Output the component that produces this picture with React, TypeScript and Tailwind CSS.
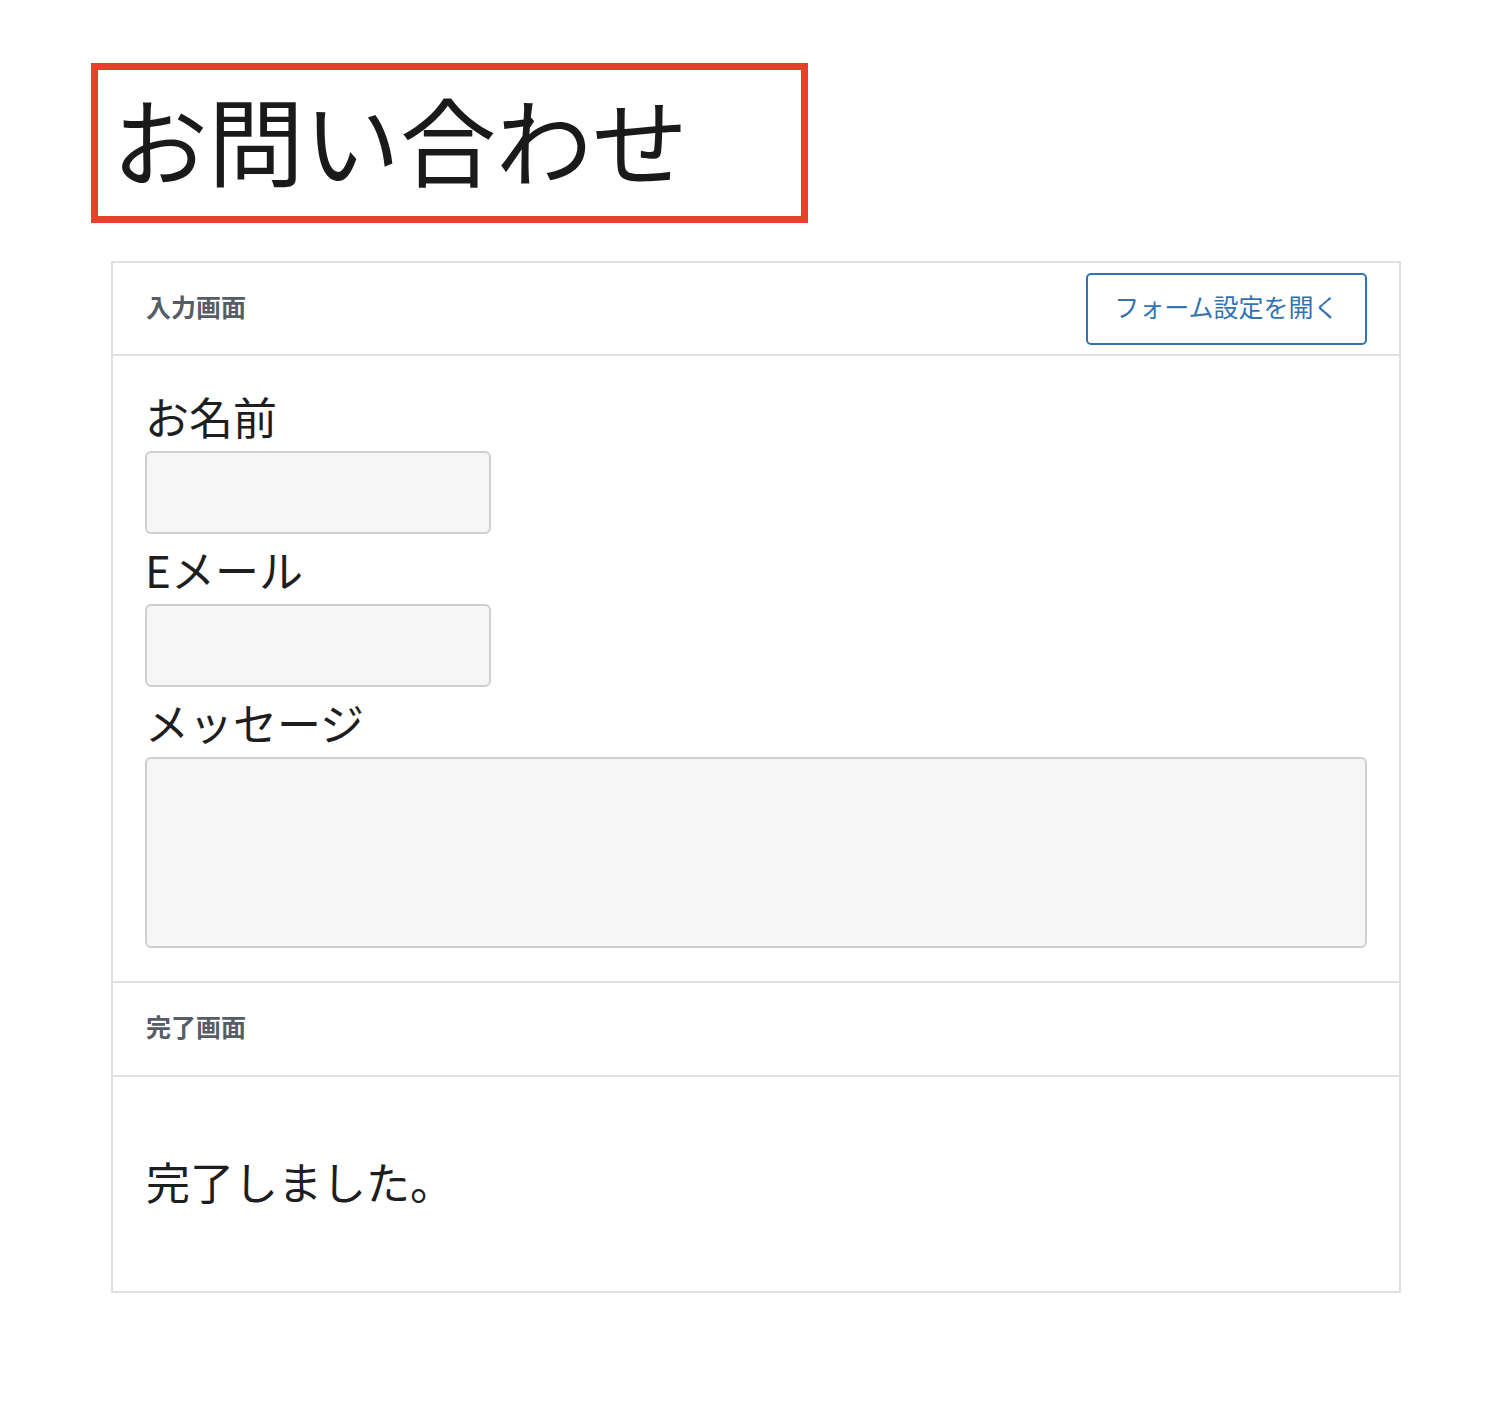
const jp = "font-['Noto_Sans_CJK_JP','Noto_Sans',sans-serif]";

function Field(props: { label: string; tall?: boolean }) {
  return (
    <div>
      <div className="text-[44px] leading-[70px] text-[#1e1e1e]">{props.label}</div>
      <div
        className={
          "rounded-[6px] border-2 border-[#cfcfcf] bg-[#f6f6f6] " +
          (props.tall ? "h-[191px] w-full" : "h-[83px] w-[346px]")
        }
      />
    </div>
  );
}

export default function App() {
  return (
    <div className={"min-h-[1404px] bg-white pt-[63px] " + jp}>
      <div className="ml-[91px] flex h-[160px] w-[717px] items-center border-[7px] border-[#e8412b] pl-[14px]">
        <h1 className="pb-[10px] text-[96px] leading-none text-[#1a1a1a]">お問い合わせ</h1>
      </div>

      <div className="ml-[111px] mt-[38px] w-[1290px] border-2 border-[#e0e0e0]">
        <div className="flex h-[93px] items-center justify-between border-b-2 border-[#e0e0e0] pl-[33px] pr-[32px]">
          <span className="pb-[4px] text-[25px] font-bold text-[#555d66]">入力画面</span>
          <button className="flex h-[72px] w-[281px] items-center justify-center rounded-[5px] border-2 border-[#3473b1] pb-[3px] text-[25px] text-[#3473b1]">
            フォーム設定を開く
          </button>
        </div>

        <div className="border-b-2 border-[#e0e0e0] px-[32px] pt-[25px] pb-[33px]">
          <Field label="お名前" />
          <Field label="Eメール" />
          <Field label="メッセージ" tall />
        </div>

        <div className="flex h-[94px] items-center border-b-2 border-[#e0e0e0] px-[33px]">
          <span className="pb-[4px] text-[25px] font-bold text-[#555d66]">完了画面</span>
        </div>

        <div className="flex h-[214px] items-center px-[33px]">
          <p className="pb-[6px] text-[44px] leading-[70px] text-[#1e1e1e]">完了しました。</p>
        </div>
      </div>
    </div>
  );
}
